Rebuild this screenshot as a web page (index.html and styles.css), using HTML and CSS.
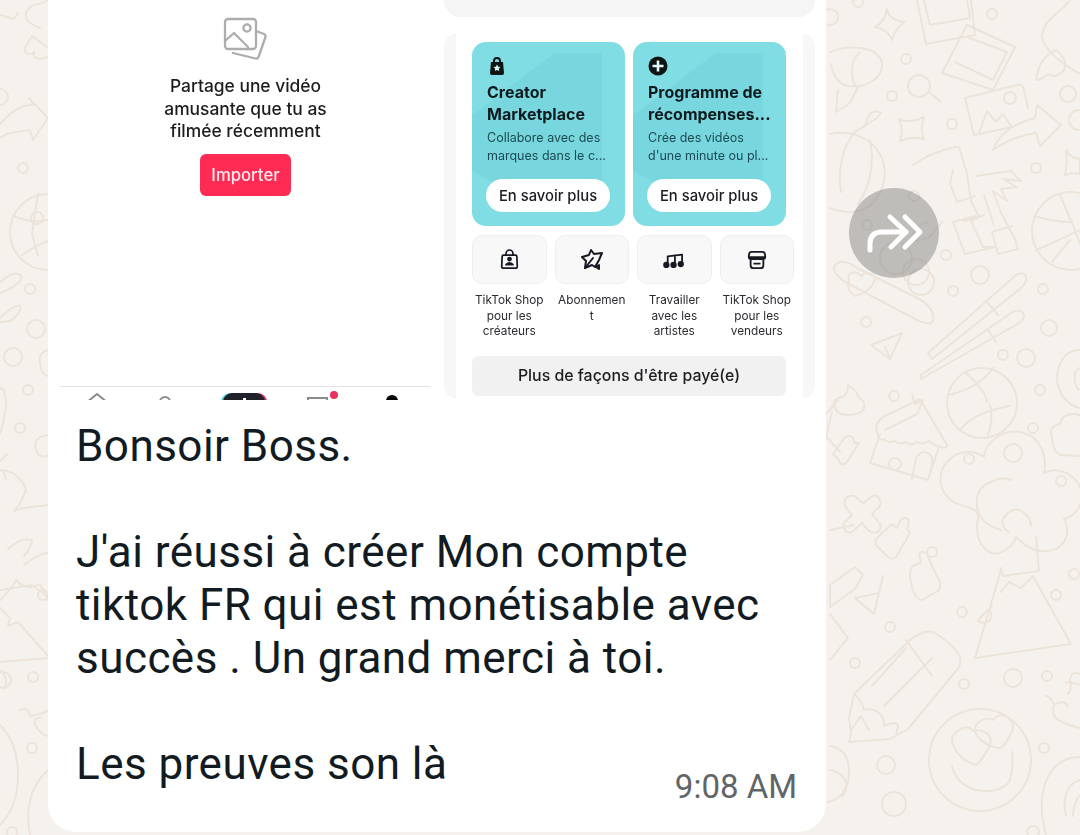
FILE: index.html
```html
<!DOCTYPE html>
<html lang="fr">
<head>
<meta charset="utf-8">
<title>Message</title>
<link rel="stylesheet" href="styles.css">
</head>
<body>
<div class="chat">
  <svg class="wallpaper" width="1080" height="835" viewBox="0 0 1080 835" fill="none" aria-hidden="true">
    <g class="dots">
      <circle cx="992" cy="14" r="5"/><circle cx="906" cy="59" r="5"/><circle cx="892" cy="96" r="5"/><circle cx="952" cy="124" r="5"/><circle cx="1036" cy="168" r="5"/><circle cx="1068" cy="94" r="8"/><circle cx="946" cy="255" r="5"/><circle cx="980" cy="275" r="9"/><circle cx="953" cy="291" r="5"/><circle cx="1043" cy="289" r="5"/><circle cx="866" cy="322" r="5"/><circle cx="1049" cy="328" r="8"/><circle cx="1003" cy="355" r="5"/><circle cx="1026" cy="358" r="9"/><circle cx="1040" cy="390" r="5"/><circle cx="894" cy="396" r="5"/><circle cx="858" cy="2" r="5"/>
      <circle cx="969" cy="459" r="5"/><circle cx="1013" cy="453" r="9"/><circle cx="1033" cy="428" r="5"/><circle cx="1061" cy="481" r="5"/><circle cx="932" cy="552" r="5"/><circle cx="962" cy="612" r="5"/><circle cx="890" cy="627" r="5"/><circle cx="1056" cy="595" r="5"/><circle cx="1074" cy="574" r="5"/><circle cx="855" cy="663" r="5"/><circle cx="964" cy="684" r="5"/><circle cx="1013" cy="678" r="9"/><circle cx="1047" cy="676" r="5"/><circle cx="1044" cy="748" r="5"/><circle cx="886" cy="765" r="9"/><circle cx="894" cy="804" r="12"/><circle cx="1033" cy="832" r="6"/>
      <circle cx="23" cy="168" r="5"/><circle cx="30" cy="289" r="5"/><circle cx="36" cy="329" r="9"/><circle cx="13" cy="357" r="9"/><circle cx="28" cy="390" r="5"/><circle cx="20" cy="428" r="5"/><circle cx="43" cy="595" r="5"/><circle cx="33" cy="677" r="5"/><circle cx="32" cy="748" r="5"/><circle cx="3" cy="680" r="8"/><circle cx="12" cy="832" r="5"/>
      <circle cx="830" cy="17" r="8"/><circle cx="916" cy="272" r="13"/><circle cx="896" cy="258" r="16"/><circle cx="867" cy="225" r="5"/><circle cx="914" cy="196" r="5"/>
    </g>
    <g class="doodle">
      <path d="M917 0l9 44 49-9-4-35M924 0l6 25 40-7-3-18"/>
      <path d="M967 25l48 22-22 43-51-17zM967 37l40 15-14 28-38-18"/>
      <path d="M965 98l52-13q6-1 7 5l4 18M965 98l9 37 38-8M979 133l8-22 9 11 7-8 8 12"/><circle cx="1010" cy="98" r="6"/>
      <path d="M993 150c7-20 27-28 42-32l2-13 24 20-21 21-4-13c-16 2-31 9-43 17z"/>
      <path d="M887 9q2 12 18 13-10 6-13 18-4-11-17-13 10-5 12-18z"/>
      <path d="M899 119q11 5 25-2-4 12 0 22-12-3-24 2 4-11-1-22z"/>
      <path d="M1066 150q6 10 14 8v16q-8-2-15 1 3-13 1-25z"/>
      <circle cx="919" cy="86" r="11"/><path d="M929 92l12 10"/>
      <path d="M830 52c18-8 50-6 52 12 1 16-18 24-34 22-10-1-16-14-17-22M860 52c-10 8-10 26-4 34M838 90l-2 22 14-9 8-16"/>
      <path d="M1070 0c-8 12-26 18-28 36 0 14 24 30 38 38M1056 50c-14 6-18 18-20 30 8 0 10-6 14-6 0 4 10 2 14-4 4-8-2-16-8-20"/>
      <path d="M830 134c20-4 42 2 52 24 8 22-2 44-20 52-12 4-22 2-32-2M855 132c-12 14-18 38-14 60M870 140c4 20 2 44-12 64M855 132l22-14 4-5q-6-4-12 2l-4 10"/>
      <path d="M913 165q16-12 42-18l4 0 8 26 4 28 8 16-8 4 12 26 12 0-30 7-12-32 22-6M953 170l-3 14 7 18 18-6M964 221l20-6"/>
      <path d="M977 176l12-2 22-3 10 10-18-2 14 8-16 2 6 12-14-10 8 22 14 26 3 10-20 5-6-22 20-6M984 195l10 30"/>
      <path d="M928 222q-16 4-16 20l18-5 12-15"/>
      <circle cx="1071" cy="231" r="39"/><path d="M1034 216q20 6 38 6M1036 250q20-8 44-20M1060 195l12 28 14 36M1052 262l18-22"/>
      <circle cx="1079" cy="120" r="10"/>
      <path d="M835 265c6-6 14-3 24 4l60 30c10 5 16 14 14 22-2 4-10 2-18-2l-64-34c-8-4-20-12-16-20z"/>
      <path d="M849 280c-4-8 8-10 12-4 6-6 18-2 12 8-4 6-10 10-18 12-6-4-8-10-6-16z"/>
      <circle cx="921" cy="282" r="13"/>
      <path d="M928 353l88-78q8-4 10 2 1 6-6 12l-88 70zM988 303l10 12M921 375l90-62q8-5 12 0 3 6-4 10l-98 56zM988 330l8 12"/>
      <path d="M871 345l31-12-12 26zM885 347l5 12"/>
      <circle cx="982" cy="403" r="35"/><path d="M948 395q30-6 46-28M965 372q22 20 22 30M960 430q14-18 50-24M990 405q4 14-2 30"/>
      <path d="M1079 350c-14 0-22 14-22 30 2 14 10 24 22 28M1079 368c-6 4-6 16 0 22"/>
      <path d="M848 385q10 6 10 12 8 4 6 12-4 6-16 6-12 0-14-10-1-6 8-8 6-2 6-12z"/>
      <path d="M912 394l3 10 8-4-6 14-16 8-16 8"/>
      <path d="M832 412l-6 24 14 16M838 400l-20 24" />
      <path d="M877 432q-3-10 8-16l35-17 27 46q0 4-6 2c-6 0-8-4-12-6-4 2-8 4-12 1-4 3-8 3-11 0-4 2-9 2-11-1-4 2-9 1-11-2-3 2-6 0-7-7z"/><path d="M880 434l-10 29 58 17 11-33M912 479l4-21q5-8 12-5 6 3 4 12l-4 15"/><circle cx="895" cy="464" r="6"/>
      <path d="M848 497q6-4 12 4l4 2 8-7q6-2 8 4t-4 10l-4 4 8 10q2 6-3 8-6 2-10-3l-5-6-10 9q-6 2-8-4-2-4 3-8l5-5-6-7q-4-6 2-12z"/>
      <path d="M845 437c5-3 10 1 9 6l5 0-12 19c-3 4-8 2-8-2l-6-6z"/>
      <path d="M878 537l14-13 5 4 3-7q6-6 9 0l-2 8 3 4-14 24q-4 3-8 0l-12-12q-2-4 2-8z"/>
      <path d="M913 590q-6-18 0-24l8-4-2-8q4-4 8 0l6 14 7 14q1 8-4 10l-14 8q-6 0-9-10z"/>
      <path d="M855 598l24-5 4-17-4 16-5 22z"/>
      <path d="M830 530l24-5M830 585l25-18 8 8-8 14-25 18z"/>
      <path d="M830 614l18 24-18 22"/>
      <path d="M1000 553c-16 4-26-16-22-34 2-14-14-10-26-18-14-10-16-30-2-42 8-8 24-10 34-2 0-14 20-30 40-24 16 4 24 24 20 40 10-6 26-2 34 10 8 14 2 32-14 36 8 14 0 32-18 32-12 2-22-6-30-14-2 8-8 12-16 16z"/>
      <path d="M1001 568l2 8 36-5-3-34M1001 530q-22-6-24-24t14-24q10-6 20-2M1009 532q-12-8-2-18 8-8 16-2 8 6 8 14"/>
      <path d="M1001 570l-26 88 96-14-38-68-12 12-12-6-8 10M992 606q-10 10-14 14 2 4 8 2 8-2 4-12"/>
      <path d="M851 733l-2-15 5-24 58-56 12-6q8-2 14 3 16 10 22 22 2 8-4 14l-48 58-18 10-41 3z"/><path d="M906 640l26 36M872 686l34-38M884 706l48-48M854 694q8 6 10 16 8-2 14 2 6 4 6 14 12-6 14 0l-2 10M851 730l10-14 8 14"/>
      <circle cx="980" cy="760" r="51"/><path d="M953 745q-4-10 8-16 8-4 12 2 8-2 14 2 6 6 2 14-6 12-13 18-16-4-23-20z"/><path d="M977 736q-5-8 2-14 8-6 14-2 4-6 12-4 8 4 8 12-2 10-12 20-14 0-24-12z"/><path d="M952 766q4 18 24 24 26 4 34-10 4-14 2-28"/>
      <path d="M1080 685q-10-4-14-2M1046 696q4 0 8 8-4 14 8 18 8 4 18 6M1056 704q8-4 12 2M1068 694q4-4 2-14 2-10 10-6"/>
      <path d="M1080 757c-30 0-40 30-38 54 0 10 2 16 4 24M1080 780c-14 4-18 20-14 36M1079 796q-6 10-6 20"/>
      <path d="M830 746q14 2 18 16 4 18-6 32-6 8-18 8M830 770q12 2 16 12 2 8-4 14"/>
      <path d="M1052 438q-4-12 8-14 2-10 14-10 8 0 8 6M1062 455q-8 0-10-17M1080 456l-18-1"/>
      <path d="M48 0c-8 6-16 2-22 12-2 8 4 12 14 16M48 48l-16-12-6 10c-4 8 4 10 8 6-2 8 6 8 16 4"/>
      <path d="M0 15l14 4 4-6M0 124q12-14 24-18l10-2-5-6 19 20-15 22-3-10c-14 2-22 2-30 8"/>
      <circle cx="0" cy="97" r="8"/>
      <circle cx="48" cy="232" r="38"/><path d="M14 216q18 8 34 4M22 255q14-10 26-14M38 194l-4 26-2 14 6 22"/>
      <circle cx="37" cy="218" r="6"/>
      <path d="M0 282l10-7q8-4 12 2-4 10-22 16M0 318q14-14 20-12 2 6-8 14-4 2-12 2"/>
      <path d="M48 350q-10 2-8 14t8 12M0 388q6 0 6 18-1 12-6 28M0 462q6-8 8-8M48 435q-16 2-12 15 2 8 12 6M0 470q4 0 6 10"/>
      <path d="M0 470q14 0 22 12 6 8 2 12-2 8-10 17 8-3 24-5 6 0 10-1M8 549q12-12 24-9 0 6-8 16M48 553q-8 0-24 12M0 600q14-14 16-20 10 12 24 4l8 16M0 590l32-5 16 12"/>
      <path d="M0 662l48-4M0 608l10 10-2 8 10-4 30 34M0 670q10 10 4 18M20 710q8-4 10 6 14-2 18-6M40 718q-8 0-4 8 4 8 12 10"/>
      <path d="M0 725q18 18 18 50t-18 50M48 770q-18 16-20 44 0 10 2 21"/>
    </g>
  </svg>

  <main class="bubble">
    <section class="shots">
      <div class="phone">
        <div class="empty">
          <svg class="empty-icon" width="46" height="46" viewBox="0 0 46 46" fill="none" aria-hidden="true">
            <path d="M6 3h25a3 3 0 0 1 3 3v24a3 3 0 0 1-3 3H6a3 3 0 0 1-3-3V6a3 3 0 0 1 3-3z"/>
            <path d="M3 25l9-8 14 14M24 29"/>
            <circle cx="25" cy="12" r="3.6"/>
            <path d="M34 15l8 3q2 1 1.500 3l-7 20q-1 2-3 1.500L11 37"/>
          </svg>
          <p class="empty-text">Partage une vidéo<br>amusante que tu as<br>filmée récemment</p>
          <div class="import">Importer</div>
        </div>
        <nav class="tabs">
          <svg width="24" height="12" viewBox="0 0 24 12" fill="none" class="tab-line tab-home"><path d="M1 11L12 2l11 9"/></svg>
          <svg width="24" height="12" viewBox="0 0 24 12" fill="none" class="tab-line tab-friends"><path d="M2 12V9a5 5 0 0 1 10 0v3M15 9q5-3 8 3"/></svg>
          <div class="tab-plus"><span class="tab-tick"></span></div>
          <div class="tab-box"><span class="tab-dot"></span></div>
          <div class="tab-me"></div>
        </nav>
      </div>
      <div class="earn">
        <div class="earn-top"></div>
        <div class="earn-panel">
          <div class="promos">
            <article class="promo">
              <svg class="promo-icon" width="20" height="20" viewBox="0 0 20 20" aria-hidden="true"><path d="M6 6V5a4 4 0 0 1 8 0v1h2l1 11q0 2-2 2H5q-2 0-2-2L4 6zm2 0h4V5a2 2 0 0 0-4 0z" fill="#0c1414"/><path d="M10 8.500l1.200 2.300 2.300.3-1.700 1.600.4 2.300-2.200-1.100-2.200 1.100.4-2.300-1.700-1.600 2.300-.3z" fill="#d8f4f5"/></svg>
              <h3 class="promo-title">Creator Marketplace</h3>
              <p class="promo-desc">Collabore avec des<br>marques dans le c...</p>
              <div class="promo-btn">En savoir plus</div>
            </article>
            <article class="promo">
              <svg class="promo-icon" width="20" height="20" viewBox="0 0 20 20" aria-hidden="true"><circle cx="10" cy="10" r="9.500" fill="#0c1414"/><path d="M8.700 4.500h2.600v4.200h4.200v2.600h-4.200v4.200H8.700v-4.200H4.500V8.700h4.200z" fill="#e6f8f8"/></svg>
              <h3 class="promo-title">Programme de récompenses...</h3>
              <p class="promo-desc">Crée des vidéos<br>d'une minute ou pl...</p>
              <div class="promo-btn">En savoir plus</div>
            </article>
          </div>
          <div class="tools">
            <div class="tool">
              <div class="tool-box"><svg width="19" height="21" viewBox="0 0 22 24" fill="none" class="tool-svg"><path d="M7 7V5a4 4 0 0 1 8 0v2M4 7h14a1.500 1.500 0 0 1 1.500 1.500L20 20a2 2 0 0 1-2 2H4a2 2 0 0 1-2-2L2.500 8.500A1.500 1.500 0 0 1 4 7z"/><circle cx="11" cy="11.500" r="1.800" fill="#161823"/><path d="M7 18q4-4 8 0z" fill="#161823"/></svg></div>
              <div class="tool-label">TikTok Shop pour les créateurs</div>
            </div>
            <div class="tool">
              <div class="tool-box"><svg width="24" height="24" viewBox="0 0 24 24" fill="none" class="tool-svg"><path d="M11 2l3 4 8-1-3 7-4 7-3-2-7 3 1-7-4-4 7-2z"/><path d="M5 20l8-10M19 21l-3-2 3-2z" /></svg></div>
              <div class="tool-label">Abonnemen t</div>
            </div>
            <div class="tool">
              <div class="tool-box"><svg width="24" height="18" viewBox="0 0 24 20" fill="none" class="tool-svg"><path d="M5 15V6l16-2v10M13 5v10"/><circle cx="3.500" cy="15.500" r="2.500" fill="#161823"/><circle cx="11.500" cy="15.500" r="2.500" fill="#161823"/><circle cx="19.500" cy="14.500" r="2.500" fill="#161823"/></svg></div>
              <div class="tool-label">Travailler avec les artistes</div>
            </div>
            <div class="tool">
              <div class="tool-box"><svg width="20" height="20" viewBox="0 0 22 22" fill="none" class="tool-svg"><path d="M5 2h12q3 0 3 5v1q0 2-3 2H5Q2 10 2 8V7q0-5 3-5zM2 8h18M4 10v7q0 3 3 3h8q3 0 3-3v-7M8 15h6"/></svg></div>
              <div class="tool-label">TikTok Shop pour les vendeurs</div>
            </div>
          </div>
          <div class="more">Plus de façons d'être payé(e)</div>
        </div>
      </div>
    </section>
    <p class="caption">Bonsoir Boss.<br><br>J'ai réussi à créer Mon compte<br>tiktok FR qui est monétisable avec<br>succès . Un grand merci à toi.<br><br>Les preuves son là</p>
    <time class="stamp">9:08 AM</time>
  </main>

  <div class="forward">
    <svg width="90" height="90" viewBox="0 0 90 90" fill="none" aria-hidden="true"><path d="M21 62v-6q0-12 12-12h24"/><path d="M41 29l16 15-15 15M56 29l15 15-15 15"/></svg>
  </div>
</div>
</body>
</html>
```
FILE: styles.css
```css
* { box-sizing: border-box; }
html, body { margin: 0; padding: 0; }
body { background: #f5f2ed; font-family: "Inter", "Liberation Sans", sans-serif; }
.chat { position: relative; width: 1080px; height: 835px; overflow: hidden; padding-left: 48px; }
.wallpaper { position: absolute; left: 0; top: 0; }
.dots circle, .doodle path, .doodle circle { stroke: #ece4db; stroke-width: 2; stroke-linecap: round; stroke-linejoin: round; }
.bubble { position: relative; width: 778px; height: 832px; background: #fff; border-radius: 0 0 28px 28px; }

.shots { display: flex; height: 400px; overflow: hidden; filter: blur(.3px); }
.phone { width: 396px; padding-left: 12px; display: flex; flex-direction: column; }
.empty { height: 386px; width: 371px; display: flex; flex-direction: column; align-items: center; }
.empty-icon { margin-top: 16px; margin-left: -2px; }
.empty-icon path, .empty-icon circle { stroke: #adadad; stroke-width: 2.300; stroke-linejoin: round; stroke-linecap: round; }
.empty-text { margin: 13px 0 0; font-size: 17.400px; line-height: 22.500px; font-weight: 500; color: #1c1c1f; text-align: center; }
.import { margin-top: 11px; width: 91px; height: 42px; border-radius: 6px; background: #fe2c55; color: #fde8ec; font-size: 16.700px; font-weight: 500; display: flex; align-items: center; justify-content: center; }
.tabs { width: 371px; height: 14px; border-top: 1px solid #e3e3e3; display: flex; align-items: flex-start; overflow: hidden; padding-left: 25px; }
.tab-line { flex: none; }
.tab-line path { stroke: #8b8b8b; stroke-width: 2; }
.tab-home { margin-top: 5px; margin-right: 49px; }
.tab-friends { margin-top: 6px; margin-right: 41px; }
.tab-plus { flex: none; width: 42px; height: 20px; margin-top: 6px; border-radius: 9px 9px 0 0; background: #20202a; box-shadow: -2px 0 0 #5fd8de, 2px 0 0 #e0326a; display: flex; justify-content: center; }
.tab-tick { width: 3px; height: 4px; margin-top: 5px; background: #fff; }
.tab-box { flex: none; width: 21px; height: 16px; margin-left: 42px; margin-top: 10px; border: 2px solid #8b8b8b; position: relative; }
.tab-me { flex: none; width: 12px; height: 12px; border-radius: 50%; background: #000; margin-left: 58px; margin-top: 8px; }
.tab-dot { position: absolute; left: 21px; top: -8px; width: 8px; height: 8px; border-radius: 50%; background: #e8315f; }

.earn { width: 371px; display: flex; flex-direction: column; gap: 16px; }
.earn-top { height: 17px; background: #f5f5f5; border-radius: 0 0 16px 16px; }
.earn-panel { position: relative; height: 366px; border-radius: 14px; background: linear-gradient(to right, #f7f7f7 0 12px, #fff 12px 359px, #f7f7f7 359px); padding: 9px 0 0 28px; }
.promos { display: flex; gap: 8px; }
.promo { position: relative; width: 153px; height: 184px; border-radius: 14px; background: #7fdde3; padding: 14px 14px 0; overflow: hidden; color: #0c1a1e; }
.promo::before { content: ""; position: absolute; inset: 0; background: #72d0d8; clip-path: polygon(0 40%, 54% 6%, 85% 6%, 85% 78%, 50% 92%, 0 70%); opacity: .45; }
.promo > * { position: relative; }
.promo-icon { display: block; margin-bottom: 5px; margin-left: 1px; }
.promo-title { margin: 0 0 4px 1px; font-size: 16px; line-height: 22px; font-weight: 700; }
.promo-desc { margin: 0 0 0 1px; font-size: 12.500px; line-height: 17.500px; color: #1b4a52; white-space: nowrap; }
.promo-btn { margin-top: 15px; width: 124px; height: 33px; border-radius: 17px; background: #fff; font-size: 14.800px; font-weight: 500; color: #1b1b20; display: flex; align-items: center; justify-content: center; }
.tools { display: flex; gap: 8px; margin-top: 9px; width: 322px; }
.tool { width: 74.500px; }
.tool-box { height: 49px; border: 1px solid #efefef; border-radius: 10px; background: #f8f8f8; display: flex; align-items: center; justify-content: center; }
.tool-svg path, .tool-svg circle { stroke: #161823; stroke-width: 2; stroke-linejoin: round; stroke-linecap: round; }
.tool-label { margin: 9px auto 0; width: 73px; font-size: 11.800px; line-height: 15.500px; color: #2b2b30; text-align: center; word-break: break-all; overflow-wrap: anywhere; }
.tools .tool:nth-child(1) .tool-label, .tools .tool:nth-child(3) .tool-label, .tools .tool:nth-child(4) .tool-label { word-break: normal; }
.more { margin-top: 16px; width: 314px; height: 40px; border-radius: 6px; background: #f1f1f1; color: #1b1b20; font-size: 15.900px; font-weight: 500; display: flex; align-items: center; justify-content: center; }

.caption { margin: 20px 0 0 28px; font-family: "Roboto", "Liberation Sans", sans-serif; font-size: 44px; letter-spacing: .46px; line-height: 53px; color: #111b21; }
.stamp { position: absolute; right: 29px; bottom: 27px; font-family: "Roboto", "Liberation Sans", sans-serif; font-size: 33px; line-height: 36px; color: #5f6568; }
.forward { position: absolute; left: 849px; top: 188px; width: 90px; height: 90px; border-radius: 50%; background: rgba(110, 110, 110, .4); }
.forward path { stroke: #fff; stroke-width: 5; stroke-linecap: round; stroke-linejoin: round; }
```
